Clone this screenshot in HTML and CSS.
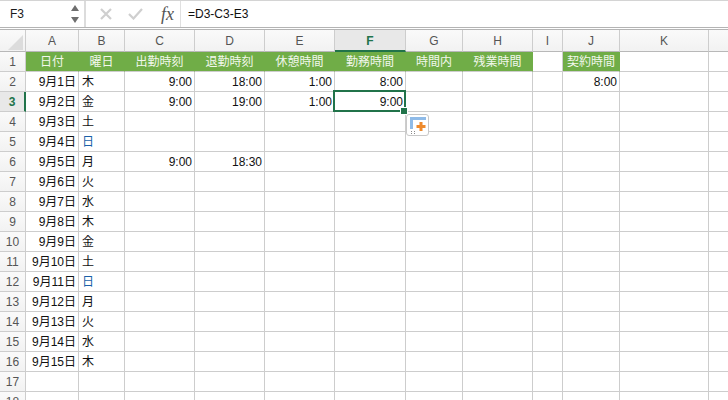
FILE: index.html
```html
<!DOCTYPE html>
<html lang="ja">
<head>
	<meta charset="utf-8">
	<title>勤務表</title>
	<link rel="stylesheet" href="styles.css">
</head>
<body>
	<div class="formula-bar">
		<div class="name-box">
			<span class="cell-ref">F3</span>
			<svg class="stepper" width="10" height="20" viewBox="0 0 10 20"><path d="M5 1 9 7H1z" fill="#6e6e6e"/><path d="M5 19 9 13H1z" fill="#6e6e6e"/></svg>
		</div>
		<div class="actions">
			<svg width="12" height="12" viewBox="0 0 12 12"><path d="M1 1 11 11M11 1 1 11" stroke="#cfcfcf" stroke-width="2.2" fill="none"/></svg>
			<svg width="15" height="12" viewBox="0 0 15 12"><path d="M1 6 5.500 10.500 14 1" stroke="#cfcfcf" stroke-width="2.2" fill="none"/></svg>
			<i class="fx">fx</i>
		</div>
		<div class="formula">=D3-C3-E3</div>
	</div>

	<div class="sheet">
		<table class="grid">
			<colgroup>
				<col class="w-head"><col class="w-a"><col class="w-b"><col class="w-c"><col class="w-c"><col class="w-c"><col class="w-f"><col class="w-g"><col class="w-c"><col class="w-i"><col class="w-g"><col class="w-k"><col class="w-l">
			</colgroup>
			<tr class="col-heads">
				<th class="corner"><svg width="15" height="15" viewBox="0 0 15 15"><path d="M15 0V15H0z" fill="#dcdcdc"/></svg></th>
				<th>A</th><th>B</th><th>C</th><th>D</th><th>E</th><th class="on">F</th><th>G</th><th>H</th><th>I</th><th>J</th><th>K</th><th></th>
			</tr>
			<tr class="title-row">
				<th>1</th>
				<td class="title">日付</td><td class="title">曜日</td><td class="title">出勤時刻</td><td class="title">退勤時刻</td><td class="title">休憩時間</td><td class="title">勤務時間</td><td class="title">時間内</td><td class="title">残業時間</td><td></td><td class="title">契約時間</td><td></td><td></td>
			</tr>
			<tr><th>2</th><td class="num">9月1日</td><td>木</td><td class="num">9:00</td><td class="num">18:00</td><td class="num">1:00</td><td class="num">8:00</td><td></td><td></td><td></td><td class="num">8:00</td><td></td><td></td></tr>
			<tr><th class="row-on">3</th><td class="num">9月2日</td><td>金</td><td class="num">9:00</td><td class="num">19:00</td><td class="num">1:00</td><td class="num selected">9:00
				<span class="sel-box"></span><span class="handle"></span>
				<span class="paste-opts"><svg width="20" height="20" viewBox="0 0 20 20"><path d="M2 2H18V5H5V14H2z" fill="#8fbbe8"/><path d="M11.500 7H14.500V10H17.500V13H14.500V16H11.500V13H8.500V10H11.500z" fill="#ee8a2c"/><path d="M3 16H4V17H3zM6 16H7V17H6zM3 18H4V19H3zM6 18H7V19H6z" fill="#8a8a8a"/></svg></span>
			</td><td></td><td></td><td></td><td></td><td></td><td></td></tr>
			<tr><th>4</th><td class="num">9月3日</td><td>土</td><td></td><td></td><td></td><td></td><td></td><td></td><td></td><td></td><td></td><td></td></tr>
			<tr><th>5</th><td class="num">9月4日</td><td class="sun">日</td><td></td><td></td><td></td><td></td><td></td><td></td><td></td><td></td><td></td><td></td></tr>
			<tr><th>6</th><td class="num">9月5日</td><td>月</td><td class="num">9:00</td><td class="num">18:30</td><td></td><td></td><td></td><td></td><td></td><td></td><td></td><td></td></tr>
			<tr><th>7</th><td class="num">9月6日</td><td>火</td><td></td><td></td><td></td><td></td><td></td><td></td><td></td><td></td><td></td><td></td></tr>
			<tr><th>8</th><td class="num">9月7日</td><td>水</td><td></td><td></td><td></td><td></td><td></td><td></td><td></td><td></td><td></td><td></td></tr>
			<tr><th>9</th><td class="num">9月8日</td><td>木</td><td></td><td></td><td></td><td></td><td></td><td></td><td></td><td></td><td></td><td></td></tr>
			<tr><th>10</th><td class="num">9月9日</td><td>金</td><td></td><td></td><td></td><td></td><td></td><td></td><td></td><td></td><td></td><td></td></tr>
			<tr><th>11</th><td class="num">9月10日</td><td>土</td><td></td><td></td><td></td><td></td><td></td><td></td><td></td><td></td><td></td><td></td></tr>
			<tr><th>12</th><td class="num">9月11日</td><td class="sun">日</td><td></td><td></td><td></td><td></td><td></td><td></td><td></td><td></td><td></td><td></td></tr>
			<tr><th>13</th><td class="num">9月12日</td><td>月</td><td></td><td></td><td></td><td></td><td></td><td></td><td></td><td></td><td></td><td></td></tr>
			<tr><th>14</th><td class="num">9月13日</td><td>火</td><td></td><td></td><td></td><td></td><td></td><td></td><td></td><td></td><td></td><td></td></tr>
			<tr><th>15</th><td class="num">9月14日</td><td>水</td><td></td><td></td><td></td><td></td><td></td><td></td><td></td><td></td><td></td><td></td></tr>
			<tr><th>16</th><td class="num">9月15日</td><td>木</td><td></td><td></td><td></td><td></td><td></td><td></td><td></td><td></td><td></td><td></td></tr>
			<tr><th>17</th><td></td><td></td><td></td><td></td><td></td><td></td><td></td><td></td><td></td><td></td><td></td><td></td></tr>
			<tr><th>18</th><td></td><td></td><td></td><td></td><td></td><td></td><td></td><td></td><td></td><td></td><td></td><td></td></tr>
		</table>
	</div>
</body>
</html>
```

FILE: styles.css
```css
html, body {
	margin: 0;
	height: 400px;
	overflow: hidden;
	background: #fff;
}

body {
	font-family: "Liberation Sans", "Noto Sans CJK JP", sans-serif;
	font-size: 12px;
	color: #1a1a1a;
}

.formula-bar {
	display: flex;
	align-items: stretch;
	height: 26px;
	border-top: 1px solid #d4d4d4;
	border-bottom: 1px solid #b4b4b4;
}

.name-box {
	display: flex;
	align-items: center;
	justify-content: space-between;
	width: 86px;
	box-sizing: border-box;
	padding: 0 4px 0 10px;
	border-right: 2px solid #dcdcdc;
}

.cell-ref {
	font-size: 12px;
}

.actions {
	display: flex;
	align-items: center;
	width: 95px;
	box-sizing: border-box;
	padding-left: 14px;
	gap: 16px;
	border-right: 1px solid #e0e0e0;
}

.fx {
	margin-left: 2px;
	font-family: "Liberation Serif", serif;
	font-size: 18px;
	color: #555;
}

.formula {
	padding-left: 7px;
	line-height: 26px;
	font-size: 12px;
	color: #111;
}

.sheet {
	margin-top: 1px;
	border-top: 1px solid #b4b4b4;
}

.grid {
	table-layout: fixed;
	width: 728px;
	border-collapse: separate;
	border-spacing: 0;
}

.w-head { width: 26px; }
.w-a { width: 53px; }
.w-b { width: 46px; }
.w-c { width: 70px; }
.w-f { width: 71px; }
.w-g { width: 57px; }
.w-i { width: 30px; }
.w-k { width: 89px; }
.w-l { width: 20px; }

tr {
	height: 20px;
}

th, td {
	box-sizing: border-box;
	padding: 1px 0 0;
	border-right: 1px solid #cdcdcd;
	border-bottom: 1px solid #cdcdcd;
	line-height: 16px;
	font-weight: normal;
	white-space: nowrap;
}

td {
	padding: 1px 2px 0 3px;
	font-size: 12px;
	color: #111;
}

th {
	text-align: center;
	color: #555;
	background: linear-gradient(#fafafa, #f2f2f2);
}

.col-heads {
	height: 22px;
}

.col-heads th {
	border-bottom-color: #b8b8b8;
}

.corner svg {
	display: block;
	margin: 2px 2px 0 auto;
}

.col-heads .on {
	background: #e8e8e8;
	color: #21734a;
	font-weight: bold;
	border-bottom: 2px solid #21734a;
}

.row-on {
	background: #e8e8e8;
	color: #21734a;
	font-weight: bold;
	border-right: 2px solid #21734a;
}

.title {
	padding: 1px 0 0;
	background: #70ad47;
	color: #f2f7ec;
	text-align: center;
	border-right-color: #70ad47;
}

.num {
	text-align: right;
}

td.sun {
	color: #1a5fa8;
}

.selected {
	position: relative;
}

.sel-box {
	position: absolute;
	top: -2px;
	left: -2px;
	right: -1px;
	bottom: -1px;
	border: 2px solid #21734a;
}

.handle {
	position: absolute;
	right: -3px;
	bottom: -4px;
	width: 6px;
	height: 6px;
	background: #21734a;
	border: 1px solid #fff;
}

.paste-opts {
	position: absolute;
	top: 22px;
	left: 71px;
	display: flex;
	align-items: center;
	justify-content: center;
	width: 23px;
	height: 22px;
	box-sizing: border-box;
	border: 1px solid #c8c8c8;
	border-radius: 3px;
	background: #fff;
}
```
